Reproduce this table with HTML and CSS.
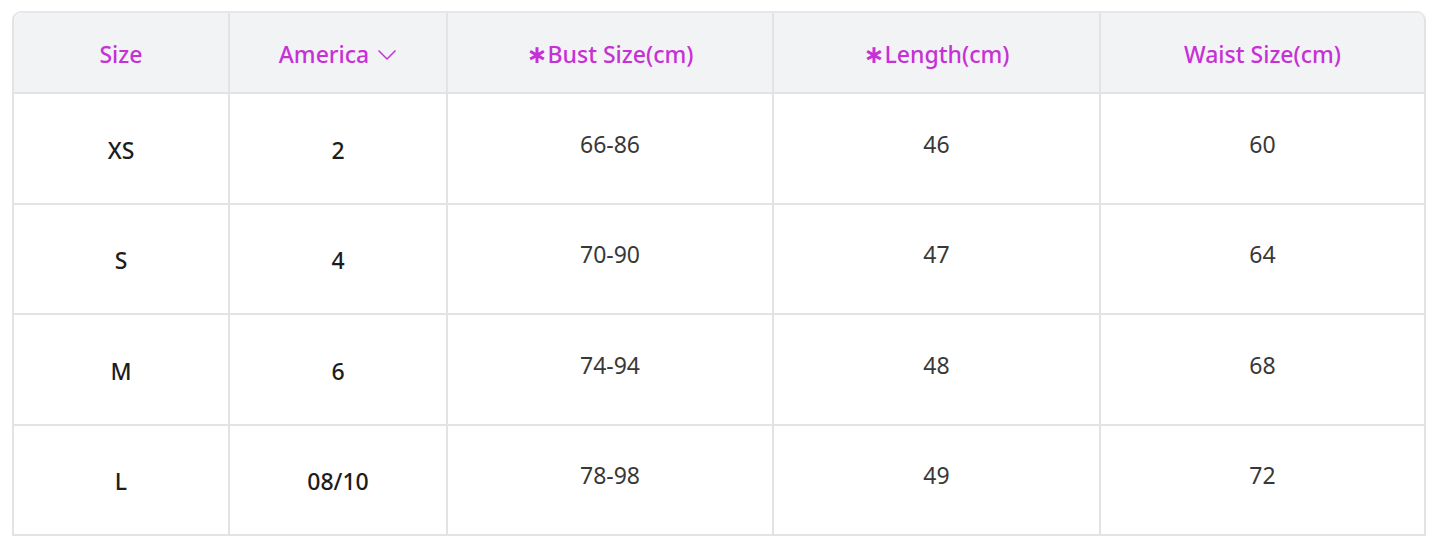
FILE: index.html
```html
<!DOCTYPE html>
<html>
<head>
<meta charset="utf-8">
<link rel="stylesheet" href="styles.css">
</head>
<body>
<div class="wrap">
<table class="size-table">
  <colgroup>
    <col class="c1"><col class="c2"><col class="c3"><col class="c4"><col class="c5">
  </colgroup>
  <thead>
    <tr>
      <th>Size</th>
      <th><span class="sel">America<svg class="chev" viewBox="0 0 20 12" width="20" height="12"><path d="M1.5 1.5 L10 10 L18.5 1.5" fill="none" stroke="currentColor" stroke-width="1.5"/></svg></span></th>
      <th><span class="ast">∗</span>Bust Size(cm)</th>
      <th><span class="ast">∗</span>Length(cm)</th>
      <th>Waist Size(cm)</th>
    </tr>
  </thead>
  <tbody>
    <tr class="r-tall"><td class="k">XS</td><td class="k">2</td><td class="v">66-86</td><td class="v">46</td><td class="v">60</td></tr>
    <tr class="r-short"><td class="k">S</td><td class="k">4</td><td class="v">70-90</td><td class="v">47</td><td class="v">64</td></tr>
    <tr class="r-tall"><td class="k">M</td><td class="k">6</td><td class="v">74-94</td><td class="v">48</td><td class="v">68</td></tr>
    <tr class="r-short"><td class="k">L</td><td class="k">08/10</td><td class="v">78-98</td><td class="v">49</td><td class="v">72</td></tr>
  </tbody>
</table>
</div>
</body>
</html>
```

FILE: styles.css
```css
html, body {
  margin: 0;
  padding: 0;
  background: #ffffff;
}
.wrap {
  padding: 11px 0 0 12px;
}
.size-table {
  border-collapse: separate;
  border-spacing: 0;
  table-layout: fixed;
  width: 1412px;
  font-family: "Noto Sans", "Open Sans", sans-serif;
  font-size: 23px;
  border-top: 2px solid #e6e7ea;
  border-left: 2px solid #e3e3e3;
  border-radius: 9px 9px 0 0;
}
.c1 { width: 216px; }
.c2 { width: 218px; }
.c3 { width: 326px; }
.c4 { width: 327px; }
.c5 { width: 325px; }
th, td {
  text-align: center;
  border-right: 2px solid #e3e3e3;
  border-bottom: 2px solid #e3e3e3;
  padding: 0;
}
th {
  background: #f2f3f5;
  height: 76px;
  padding-top: 3px;
  color: #c730d6;
  font-weight: 500;
}
thead th:first-child { border-top-left-radius: 8px; }
thead th:last-child { border-top-right-radius: 8px; }
td.k {
  color: #1c1c1c;
  font-weight: 500;
  padding-top: 2px;
  height: 107px;
}
td.v {
  color: #383838;
  font-weight: 400;
  padding-bottom: 10px;
  height: 99px;
}
.r-short td.k { height: 106px; }
.r-short td.v { height: 98px; }
.ast {
  display: inline-block;
  font-family: "DejaVu Sans", sans-serif;
  font-size: 25px;
  font-weight: 700;
  line-height: 1;
  margin-right: 0;
  transform: translateY(0);
}
.sel {
  display: inline-flex;
  align-items: center;
}
.chev {
  margin-left: 8px;
  width: 20px;
  height: 12px;
  margin-top: 2px;
}
```
